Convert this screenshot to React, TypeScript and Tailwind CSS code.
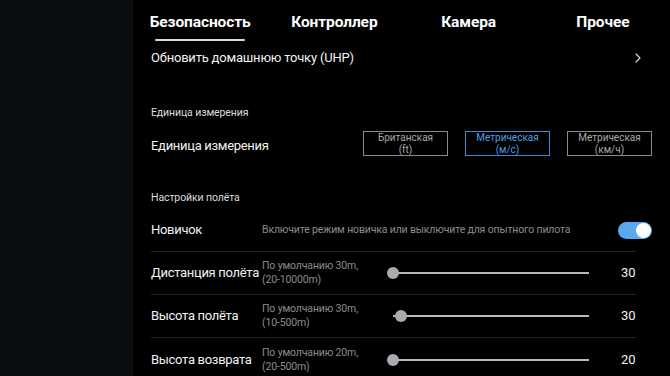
import { ChevronRight } from "lucide-react";

const tabs = ["Безопасность", "Контроллер", "Камера", "Прочее"];

const units = [
  { top: "Британская", bottom: "(ft)", active: false },
  { top: "Метрическая", bottom: "(м/с)", active: true },
  { top: "Метрическая", bottom: "(км/ч)", active: false },
];

const sliders = [
  { label: "Дистанция полёта", hint1: "По умолчанию 30m,", hint2: "(20-10000m)", min: 20, max: 10000, value: 30 },
  { label: "Высота полёта", hint1: "По умолчанию 30m,", hint2: "(10-500m)", min: 10, max: 500, value: 30 },
  { label: "Высота возврата", hint1: "По умолчанию 20m,", hint2: "(20-500m)", min: 20, max: 500, value: 20 },
];

function Slider({ min, max, value }: { min: number; max: number; value: number }) {
  const pct = (value - min) / (max - min);
  return (
    <div className="relative h-[12px] w-[202px]">
      <div className="absolute left-[6px] right-0 top-[5px] h-[2px] bg-[#b9b9b9]" />
      <div
        className="absolute top-0 h-[12px] w-[12px] rounded-full bg-[#a9abb0]"
        style={{ left: pct * (202 - 12) }}
      />
    </div>
  );
}

export default function App() {
  return (
    <div
      className="flex h-[376px] w-[670px] overflow-hidden bg-black text-[#f2f2f2]"
      style={{ fontFamily: "Roboto, 'Noto Sans', sans-serif" }}
    >
      <aside className="h-full w-[133px] shrink-0 bg-[#0a0d11]" />

      <main className="flex min-w-0 flex-1 flex-col">
        <div className="grid h-[44px] shrink-0 grid-cols-4">
          {tabs.map((t, i) => (
            <div key={t} className="relative flex flex-col items-center pt-[12px]">
              <span className="text-[15.5px] font-bold leading-[20px] tracking-[-0.1px] text-white">{t}</span>
              {i === 0 && <div className="absolute top-[39px] h-[2px] w-[90px] rounded-full bg-[#dcdcdc]" />}
            </div>
          ))}
        </div>

        <div className="shrink-0 pl-[18px] pr-[18px]">
          <div className="flex h-[28px] items-center justify-between">
            <span className="text-[13px] tracking-[-0.2px]">Обновить домашнюю точку (UHP)</span>
            <ChevronRight className="mr-[6px] h-[16px] w-[16px] text-[#e5e5e5]" strokeWidth={1.6} />
          </div>

          <div className="mt-[30px] flex h-[22px] items-center text-[10.5px] tracking-[-0.1px] text-[#dedede]">
            Единица измерения
          </div>

          <div className="flex h-[44px] items-center justify-between">
            <span className="text-[13px] tracking-[-0.3px]">Единица измерения</span>
            <div className="mb-[5px] flex gap-[17px]">
              {units.map((u, i) => (
                <div
                  key={i}
                  className={`flex h-[25px] w-[85px] flex-col items-center justify-center border text-[10px] leading-[11.5px] ${
                    u.active ? "border-[#3a8bd0] text-[#4d9fe3]" : "border-[#8a8a8a] text-[#a8a8a8]"
                  }`}
                >
                  <span>{u.top}</span>
                  <span>{u.bottom}</span>
                </div>
              ))}
            </div>
          </div>

          <div className="mt-[19px] flex h-[22px] items-center text-[10.5px] tracking-[-0.1px] text-[#dedede]">
            Настройки полёта
          </div>

          <div className="mr-[16px] flex h-[43px] items-center border-b border-[#232323]">
            <span className="w-[111px] shrink-0 text-[13px] tracking-[-0.3px]">Новичок</span>
            <span className="flex-1 text-[10.5px] tracking-[-0.15px] text-[#8c8c8c]">
              Включите режим новичка или выключите для опытного пилота
            </span>
            <div className="relative -mr-[16px] h-[17px] w-[34px] rounded-full bg-[#5aa8ef]">
              <div className="absolute right-[1px] top-[1px] h-[15px] w-[15px] rounded-full bg-white" />
            </div>
          </div>

          {sliders.map((s, i) => (
            <div
              key={s.label}
              className={`mr-[16px] flex h-[43px] items-center ${i < sliders.length - 1 ? "border-b border-[#232323]" : ""}`}
            >
              <span className="w-[111px] shrink-0 whitespace-nowrap text-[13px] tracking-[-0.3px]">{s.label}</span>
              <div className="flex w-[125px] shrink-0 flex-col text-[10.5px] leading-[14px] tracking-[-0.15px] text-[#8c8c8c]">
                <span>{s.hint1}</span>
                <span>{s.hint2}</span>
              </div>
              <Slider min={s.min} max={s.max} value={s.value} />
              <span className="ml-[32px] text-[13px]">{s.value}</span>
            </div>
          ))}
        </div>
      </main>
    </div>
  );
}
